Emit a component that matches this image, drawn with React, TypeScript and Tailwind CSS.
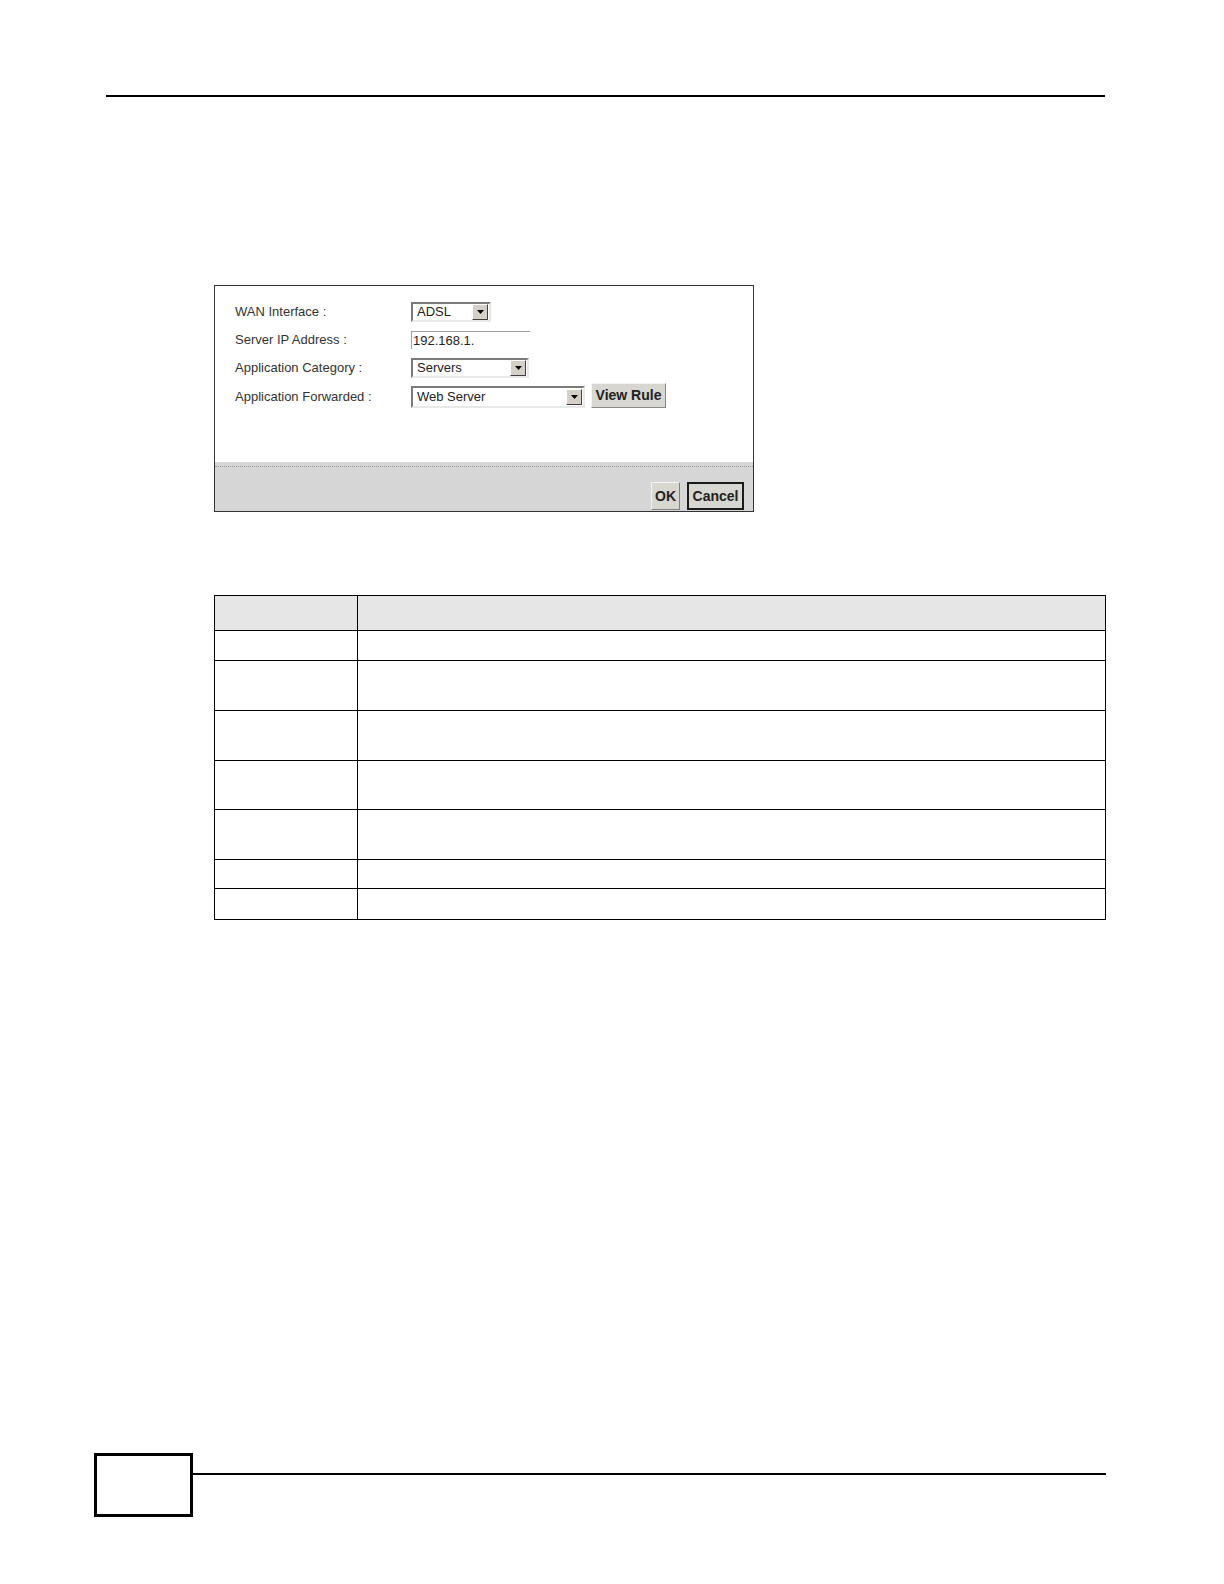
import React from "react";

const font = { fontFamily: '"Liberation Sans", Arial, sans-serif' };

function DropArrow() {
  return (
    <div className="flex h-[16px] w-[16px] items-center justify-center border border-t-white border-l-white border-r-[#404040] border-b-[#404040] bg-[#d4d0c8]">
      <svg width="7" height="4" viewBox="0 0 7 4">
        <path d="M0 0h7L3.5 4z" fill="#000" />
      </svg>
    </div>
  );
}

function Select({ value, width, height = "h-[20px]" }: { value: string; width: string; height?: string }) {
  return (
    <div
      className={`flex ${width} ${height} items-center justify-between border-2 border-t-[#7a7a7a] border-l-[#7a7a7a] border-r-[#e8e8e8] border-b-[#e8e8e8] bg-white pl-[4px] pr-[1px]`}
    >
      <span className="text-[13px] text-[#222]">{value}</span>
      <DropArrow />
    </div>
  );
}

const rows = [
  { label: "WAN Interface :", control: <Select value="ADSL" width="w-[80px]" /> },
  {
    label: "Server IP Address :",
    control: (
      <div className="flex h-[18px] w-[119px] items-center border-t border-l border-t-[#a0a0a0] border-l-[#a0a0a0] pl-[1px] text-[13px] text-[#222]">
        192.168.1.
      </div>
    ),
  },
  { label: "Application Category :", control: <Select value="Servers" width="w-[118px]" /> },
  {
    label: "Application Forwarded :",
    control: (
      <div className="flex items-center gap-[6px]">
        <Select value="Web Server" width="w-[174px]" height="h-[22px]" />
        <button className="-mt-[3px] h-[25px] w-[75px] border border-t-[#f4f4f4] border-l-[#f4f4f4] border-r-[#8a8a8a] border-b-[#8a8a8a] bg-[#d8d6d0] text-[14px] font-bold text-[#222]">
          View Rule
        </button>
      </div>
    ),
  },
];

const tableRows = [30, 50, 50, 49, 50, 29, 30];

export default function App() {
  return (
    <div className="flex h-[1584px] w-[1224px] flex-col bg-white" style={font}>
      {/* header rule */}
      <div className="ml-[106px] mt-[95px] h-[2px] w-[999px] bg-black" />

      {/* dialog screenshot */}
      <div className="ml-[214px] mt-[188px] flex h-[227px] w-[540px] flex-col border border-[#333] bg-white">
        <div className="flex flex-1 flex-col gap-[8px] pl-[20px] pt-[16px]">
          {rows.map((r) => (
            <div key={r.label} className="flex items-center">
              <span className="w-[176px] text-[13px] text-[#333]">{r.label}</span>
              {r.control}
            </div>
          ))}
        </div>
        <div className="flex h-[49px] flex-col bg-[#d6d6d6]">
          <div className="mt-[4px] border-t border-dotted border-[#9a9a9a]" />
          <div className="flex flex-1 items-end justify-end gap-[7px] pb-[1px] pr-[9px]">
            <button className="h-[28px] w-[29px] border border-t-[#f4f4f4] border-l-[#f4f4f4] border-r-[#808080] border-b-[#808080] bg-[#d8d6d0] text-[14px] font-bold text-[#222]">
              OK
            </button>
            <button className="h-[28px] w-[57px] border-2 border-[#1a1a1a] bg-[#d8d6d0] text-[14px] font-bold text-[#222]">
              Cancel
            </button>
          </div>
        </div>
      </div>

      {/* table */}
      <div className="ml-[214px] mt-[83px] w-[892px] border border-black">
        <div className="flex h-[35px] border-b border-black bg-[#e6e6e6]">
          <div className="w-[143px] border-r border-black" />
          <div className="flex-1" />
        </div>
        {tableRows.map((h, i) => (
          <div
            key={i}
            className={`flex border-black ${i < tableRows.length - 1 ? "border-b" : ""}`}
            style={{ height: h }}
          >
            <div className="w-[143px] border-r border-black" />
            <div className="flex-1" />
          </div>
        ))}
      </div>

      {/* footer */}
      <div className="mb-[67px] ml-[94px] mt-auto flex items-start">
        <div className="h-[64px] w-[99px] border-[3px] border-black" />
        <div className="mt-[20px] h-[2px] w-[913px] bg-black" />
      </div>
    </div>
  );
}
